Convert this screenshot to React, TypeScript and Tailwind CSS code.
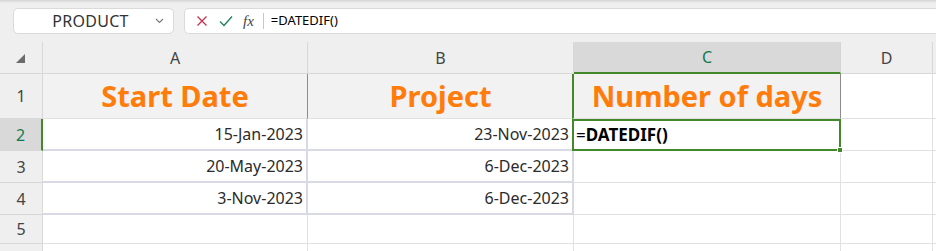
import React from 'react';

const FONT = { fontFamily: '"Noto Sans", "Open Sans", sans-serif' };

const cols = ['A', 'B', 'C', 'D'];

const HeaderCell = ({ label, active }: { label: string; active?: boolean }) => (
  <div
    className={
      active
        ? 'flex items-center justify-center bg-[#d9d9d9] border-r border-r-[#d4d4d4] border-b-2 border-b-[#43882a] text-[#137a4f] text-[16px]'
        : 'flex items-center justify-center bg-[#efefef] border-r border-b border-[#d8d8d8] text-[#444] text-[16px]'
    }
  >
    {label}
  </div>
);

const RowHead = ({ n, active }: { n?: number; active?: boolean }) => (
  <div
    className={
      active
        ? 'flex items-center justify-center bg-[#d9d9d9] border-r-2 border-r-[#43882a] border-b border-b-[#d8d8d8] text-[#137a4f] text-[16px]'
        : 'flex items-center justify-center bg-[#efefef] border-r border-b border-[#d8d8d8] text-[#444] text-[16px]'
    }
  >
    {n}
  </div>
);

const TitleCell = ({ text, greenLeft }: { text: string; greenLeft?: boolean }) => (
  <div
    className={
      'flex items-center justify-center bg-[#f2f2f2] border-r border-r-[#8c8c8c] border-b border-b-[#e1e1e1] text-[#ff7c0a] text-[29px] font-bold ' +
      (greenLeft ? 'border-l-2 border-l-[#43882a] -ml-[2px]' : '')
    }
  >
    {text}
  </div>
);

const DateCell = ({ text }: { text: string }) => (
  <div className="flex items-center justify-end pr-[3px] border-r-2 border-b-2 border-[#d9d9e4] text-[16px] text-[#2b2b2b]">
    {text}
  </div>
);

const Blank = ({ last }: { last?: boolean }) => (
  <div className={last ? 'border-b border-[#e1e1e1]' : 'border-r border-b border-[#e1e1e1]'} />
);

export default function App() {
  const rows = [
    ['15-Jan-2023', '23-Nov-2023'],
    ['20-May-2023', '6-Dec-2023'],
    ['3-Nov-2023', '6-Dec-2023'],
  ];

  return (
    <div className="w-[936px] h-[251px] overflow-hidden bg-white" style={FONT}>
      {/* top bar */}
      <div className="h-[42px] bg-[#efefef] flex items-start pt-[8px] pl-[13px] gap-[10px] shadow-[inset_0_3px_3px_-2px_rgba(0,0,0,0.15)]">
        <div className="w-[161px] h-[26px] bg-white rounded-[5px] border border-[#dadada] flex items-center relative">
          <span className="w-full text-center text-[16px] tracking-[0.3px] text-[#333] pr-[6px]">PRODUCT</span>
          <svg className="absolute right-[9px] top-[9px]" width="9" height="6" viewBox="0 0 9 6">
            <path d="M1 1l3.5 3.5L8 1" fill="none" stroke="#777" strokeWidth="1.1" />
          </svg>
        </div>
        <div className="flex-1 h-[26px] bg-white rounded-l-[5px] border border-r-0 border-[#dadada] flex items-center pl-[11px]">
          <svg width="12" height="12" viewBox="0 0 12 12">
            <path d="M1.5 1.5l9 9M10.5 1.5l-9 9" stroke="#c4314b" strokeWidth="1.3" />
          </svg>
          <svg className="ml-[11px]" width="14" height="12" viewBox="0 0 14 12">
            <path d="M1 6.5l4 4L13 1.5" fill="none" stroke="#1b7f5a" strokeWidth="1.3" />
          </svg>
          <span
            className="ml-[10px] text-[15px] italic text-[#444] leading-none"
            style={{ fontFamily: '"Liberation Serif", "DejaVu Serif", serif' }}
          >
            fx
          </span>
          <div className="ml-[9px] w-px h-[16px] bg-[#c8c8c8]" />
          <span className="ml-[7px] text-[13px] text-black">=DATEDIF()</span>
        </div>
      </div>

      {/* grid */}
      <div className="grid grid-cols-[43px_265px_266px_267px_92px_3px] grid-rows-[32px_45px_32px_32px_32px_29px_20px] bg-white">
        {/* column headers */}
        <div className="bg-[#efefef] border-r border-b border-[#d8d8d8] flex items-center justify-center">
          <svg width="9" height="9" viewBox="0 0 9 9" className="mt-[1px] -ml-[2px]">
            <path d="M9 0V9H0Z" fill="#6b6b6b" />
          </svg>
        </div>
        {cols.map((c) => (
          <HeaderCell key={c} label={c} active={c === 'C'} />
        ))}
        <div className="bg-[#efefef] border-b border-[#d8d8d8]" />

        {/* row 1 */}
        <RowHead n={1} />
        <TitleCell text="Start Date" />
        <TitleCell text="Project" />
        <TitleCell text="Number of days" greenLeft />
        <Blank />
        <Blank last />

        {/* rows 2-4 */}
        {rows.map((r, i) => (
          <React.Fragment key={i}>
            <RowHead n={i + 2} active={i === 0} />
            <DateCell text={r[0]} />
            <DateCell text={r[1]} />
            {i === 0 ? (
              <div className="relative -ml-[2px] border-2 border-[#43882a] flex items-center pl-[2px] text-[17px] text-black">
                =<span className="font-bold">DATEDIF()</span>
                <div className="absolute -right-[4px] -bottom-[4px] w-[6px] h-[6px] bg-[#43882a] border border-white" />
              </div>
            ) : (
              <Blank />
            )}
            <Blank />
            <Blank last />
          </React.Fragment>
        ))}

        {/* row 5 */}
        <RowHead n={5} />
        <Blank />
        <Blank />
        <Blank />
        <Blank />
        <Blank last />

        {/* row 6, cut off at the bottom edge */}
        <RowHead />
        <Blank />
        <Blank />
        <Blank />
        <Blank />
        <Blank last />
      </div>
    </div>
  );
}
